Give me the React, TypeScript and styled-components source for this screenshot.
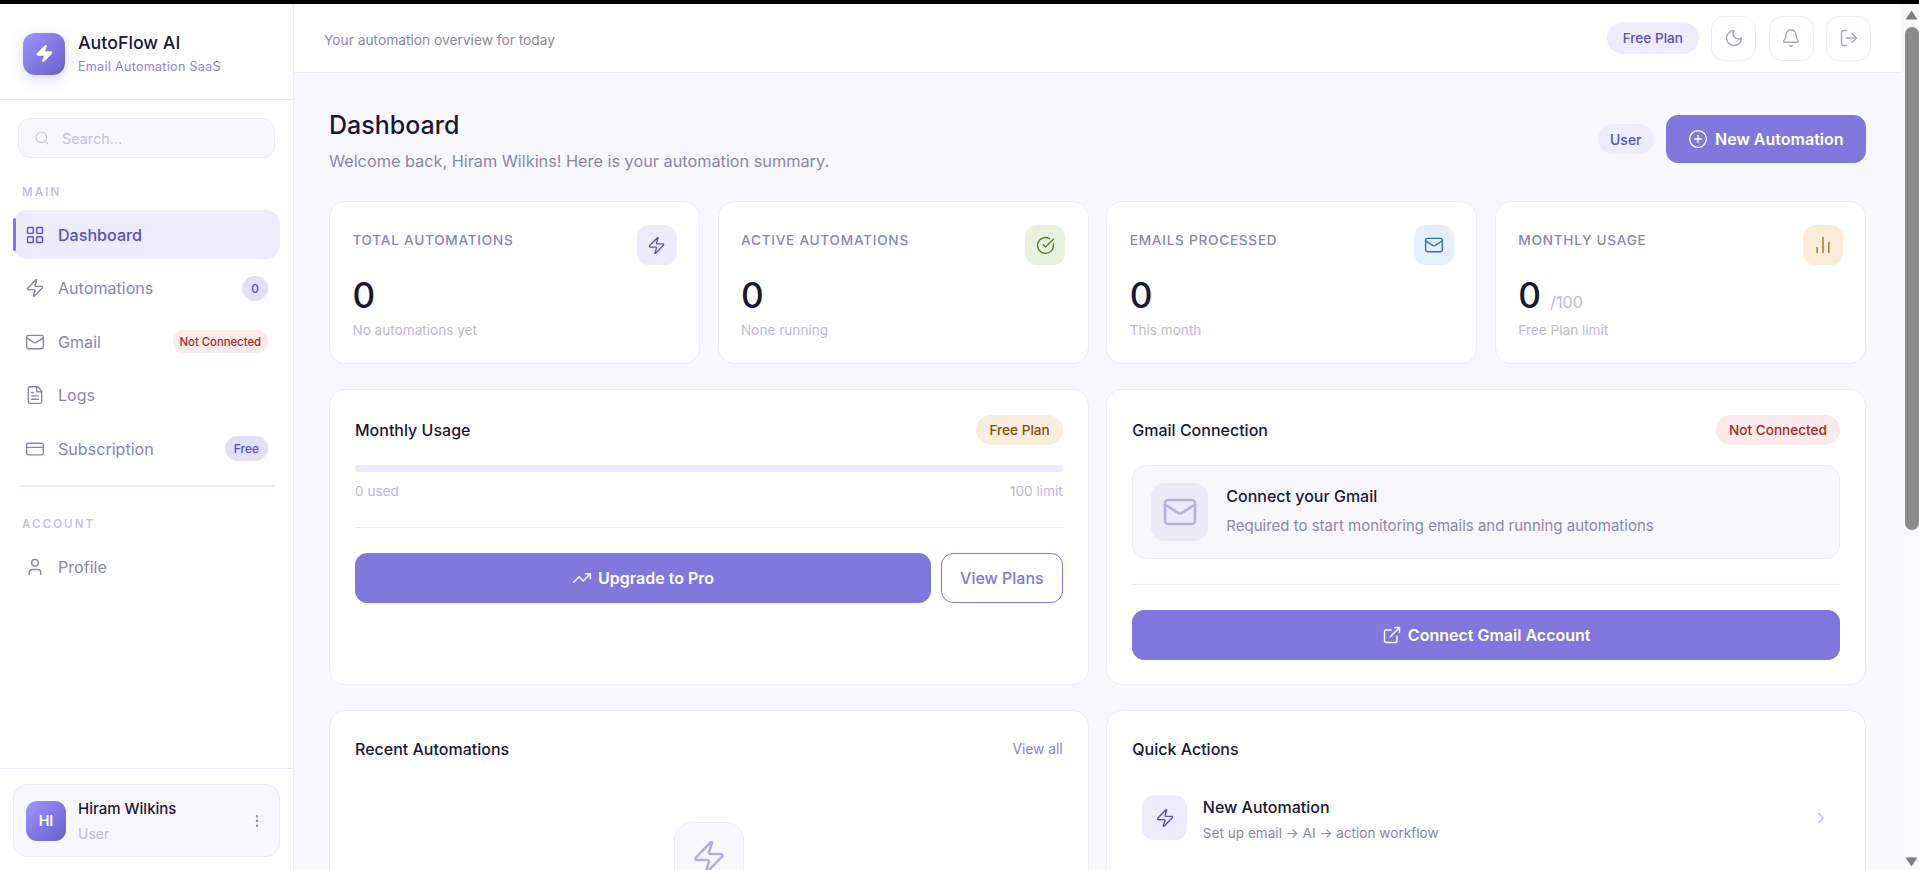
import { ReactNode } from 'react';
import styled, { createGlobalStyle } from 'styled-components';
import {
  BarChart2,
  Bell,
  ChevronRight,
  CircleCheckBig,
  CreditCard,
  ExternalLink,
  FileText,
  LayoutGrid,
  LogOut,
  Mail,
  MoreVertical,
  Moon,
  PlusCircle,
  Search,
  TrendingUp,
  User,
  Zap,
} from 'lucide-react';

const GlobalStyle = createGlobalStyle`
  * { box-sizing: border-box; }
  html, body { margin: 0; height: 100%; overflow: hidden; }
  body {
    font-family: Inter, "Noto Sans", sans-serif;
    color: #1a1733;
    background: #000;
  }
  #root { height: 100%; }
  .lucide { stroke-width: 1.7; flex: none; }
`;

const Frame = styled.div`
  height: 100vh;
  display: flex;
  flex-direction: column;
`;

const TopStrip = styled.div`
  height: 4px;
  flex: none;
  background: #000;
`;

const Shell = styled.div`
  flex: 1;
  min-height: 0;
  display: flex;
  background: #f8f7fe;
`;

/* ---------- sidebar ---------- */

const Sidebar = styled.aside`
  width: 294px;
  flex: none;
  display: flex;
  flex-direction: column;
  background: #fff;
  border-right: 1px solid #ecebf9;
`;

const Brand = styled.div`
  height: 96px;
  flex: none;
  display: flex;
  align-items: center;
  gap: 13px;
  padding: 4px 23px 0;
  border-bottom: 1px solid #ecebf9;
`;

const LogoBox = styled.div`
  width: 42px;
  height: 42px;
  border-radius: 12px;
  display: flex;
  align-items: center;
  justify-content: center;
  color: #fff;
  background: linear-gradient(135deg, #9d94ff, #6b5fc7);
  box-shadow: 0 4px 14px rgba(108, 95, 199, 0.25);
`;

const BrandName = styled.div`
  font-size: 17.8px;
  font-weight: 500;
  line-height: 24px;
  color: #1a1733;
  white-space: nowrap;
`;

const BrandTag = styled.div`
  font-size: 12.5px;
  line-height: 18px;
  margin-top: 3px;
  letter-spacing: 0.32px;
  color: #8c80e4;
  white-space: nowrap;
`;

const SearchBox = styled.div`
  height: 40px;
  margin: 18px 18px 0;
  padding: 0 15px;
  display: flex;
  align-items: center;
  gap: 12px;
  border: 1px solid #ecebf9;
  border-radius: 12px;
  background: #f8f7fe;
  color: #c5bfe4;
  font-size: 14.4px;
`;

const SectionLabel = styled.div<{ $top?: number }>`
  margin: ${(p) => p.$top ?? 0}px 22px 0;
  font-size: 11.5px;
  line-height: 14px;
  font-weight: 600;
  letter-spacing: 2.1px;
  color: #c5bfe4;
`;

const NavList = styled.nav`
  display: flex;
  flex-direction: column;
  gap: 4.6px;
  margin: 11.5px 13px 0 13px;
`;

const NavRow = styled.div<{ $active?: boolean }>`
  position: relative;
  height: 49px;
  display: flex;
  align-items: center;
  gap: 13px;
  padding: 0 12px;
  border-radius: 14px;
  font-size: 16.1px;
  font-weight: ${(p) => (p.$active ? 500 : 400)};
  color: ${(p) => (p.$active ? '#5a4fb8' : '#8a86a8')};
  background: ${(p) => (p.$active ? '#eeecfc' : 'transparent')};

  ${(p) =>
    p.$active &&
    `&::before {
      content: '';
      position: absolute;
      left: 0;
      top: 8px;
      bottom: 8px;
      width: 3px;
      border-radius: 2px;
      background: #7f76dc;
    }`}
`;

const NavLabel = styled.span`
  flex: 1;
`;

const NavBadge = styled.span<{ $tone?: 'danger' }>`
  height: ${(p) => (p.$tone ? '23px' : '25px')};
  min-width: 25px;
  padding: 0 ${(p) => (p.$tone ? '7px' : '9px')};
  display: inline-flex;
  align-items: center;
  justify-content: center;
  border-radius: 13px;
  font-size: ${(p) => (p.$tone ? '11.3px' : '12px')};
  font-weight: 500;
  color: ${(p) => (p.$tone ? '#a32a2a' : '#5a4fb8')};
  background: ${(p) => (p.$tone ? '#fbeaea' : '#e3dffa')};
`;

const SideDivider = styled.div`
  height: 2px;
  margin: 12px 18px 30px;
  background: #eeecfb;
`;

const Spacer = styled.div`
  flex: 1;
`;

const SideFooter = styled.div`
  flex: none;
  padding: 15px 13px 13px 13px;
  border-top: 1px solid #ecebf9;
`;

const UserCard = styled.div`
  height: 73px;
  display: flex;
  align-items: center;
  gap: 12px;
  padding: 0 14px 0 12px;
  border: 1px solid #ecebf9;
  border-radius: 14px;
  background: #f8f7fe;
`;

const Avatar = styled.div`
  width: 40px;
  height: 40px;
  flex: none;
  border-radius: 11px;
  display: flex;
  align-items: center;
  justify-content: center;
  font-size: 14.4px;
  font-weight: 600;
  color: #fff;
  background: linear-gradient(135deg, #9d94ff, #6b5fc7);
`;

const UserInfo = styled.div`
  flex: 1;
  padding-top: 1px;
`;

const UserName = styled.div`
  font-size: 15px;
  line-height: 20px;
  font-weight: 500;
  color: #1a1733;
`;

const UserRole = styled.div`
  font-size: 14px;
  line-height: 18px;
  margin-top: 6px;
  color: #bdb7de;
`;

/* ---------- main ---------- */

const MainArea = styled.main`
  flex: 1;
  min-width: 0;
  overflow: hidden;
  background: #f8f7fe;
`;

const ScrollRail = styled.div`
  width: 18px;
  flex: none;
  display: flex;
  flex-direction: column;
  padding: 6px 0 3px 4px;
  background: #f9f9fb;
`;

const RailThumb = styled.div`
  height: 503px;
  flex: none;
  margin-top: 7px;
  border-radius: 7px;
  background: #8b8b8b;
`;

const RailGap = styled.div`
  flex: 1;
`;

const RailSvg = styled.svg`
  display: block;
  flex: none;
  width: 13px;
  height: 10px;
`;

const RailArrow = ({ down }: { down?: boolean }) => (
  <RailSvg viewBox="0 0 13 10">
    <path d={down ? 'M6.5 9.5 L12.5 0.5 H0.5 Z' : 'M6.5 0.5 L12.5 9.5 H0.5 Z'} fill="#808080" />
  </RailSvg>
);

const TopBar = styled.header`
  height: 69px;
  display: flex;
  align-items: center;
  justify-content: space-between;
  padding: 0 30px;
  background: #fff;
  border-bottom: 1px solid #ecebf9;
`;

const TopHint = styled.div`
  padding-top: 4px;
  font-size: 13.76px;
  color: #8a86a8;
`;

const TopActions = styled.div`
  display: flex;
  align-items: center;
  gap: 12.5px;
`;

const PlanPill = styled.span`
  height: 32px;
  padding: 0 15.5px;
  display: inline-flex;
  align-items: center;
  border-radius: 16px;
  font-size: 13.6px;
  font-weight: 500;
  color: #5a4fb8;
  background: #eeecfc;
`;

const IconButton = styled.button`
  width: 45px;
  height: 45px;
  padding: 0;
  display: flex;
  align-items: center;
  justify-content: center;
  border: 1px solid #ecebf9;
  border-radius: 13px;
  background: #fff;
  color: #a9a5c4;
`;

const Content = styled.div`
  padding: 34px 35px 40px 35px;
`;

const PageHead = styled.div`
  display: flex;
  align-items: center;
  justify-content: space-between;
`;

const PageTitle = styled.h1`
  margin: 0;
  font-size: 25px;
  line-height: 36px;
  font-weight: 500;
  color: #1a1733;
`;

const PageSub = styled.div`
  margin-top: 6px;
  font-size: 16.27px;
  line-height: 24px;
  color: #8a86a8;
`;

const HeadActions = styled.div`
  display: flex;
  align-items: center;
  gap: 12px;
  margin-bottom: 2px;
`;

const RolePill = styled.span`
  height: 30px;
  padding: 0 12px;
  display: inline-flex;
  align-items: center;
  border-radius: 15px;
  font-size: 14px;
  font-weight: 500;
  color: #5a4fb8;
  background: #eeecfc;
`;

const Button = styled.button<{ $ghost?: boolean; $grow?: boolean; $block?: boolean }>`
  height: 50px;
  padding: 0 ${(p) => (p.$ghost ? 18 : 21.5)}px;
  display: inline-flex;
  align-items: center;
  justify-content: center;
  gap: 6px;
  flex: ${(p) => (p.$grow ? 1 : 'none')};
  width: ${(p) => (p.$block ? '100%' : 'auto')};
  border-radius: 12px;
  border: 1px solid ${(p) => (p.$ghost ? '#7f76dc' : '#8177dd')};
  background: ${(p) => (p.$ghost ? '#fff' : '#8177dd')};
  color: ${(p) => (p.$ghost ? '#7f76dc' : '#fff')};
  font-family: inherit;
  font-size: 16px;
  font-weight: ${(p) => (p.$ghost ? 500 : 600)};
`;

const HeadButton = styled(Button)`
  height: 48px;
  gap: 7px;
`;

const StatGrid = styled.section`
  display: grid;
  grid-template-columns: repeat(4, 1fr);
  gap: 17.6px;
  margin-top: 28px;
`;

const Card = styled.div`
  background: #fff;
  border: 1px solid #ecebf9;
  border-radius: 16px;
`;

const StatCard = styled(Card)`
  height: 162.6px;
  padding: 23px 22.4px;
`;

const StatTop = styled.div`
  display: flex;
  justify-content: space-between;
  align-items: flex-start;
`;

const StatLabel = styled.div`
  margin-top: 5px;
  font-size: 13.6px;
  line-height: 20px;
  font-weight: 500;
  letter-spacing: 0.75px;
  text-transform: uppercase;
  color: #8a86a8;
`;

const StatIcon = styled.div<{ $bg: string; $fg: string }>`
  width: 40px;
  height: 40px;
  border-radius: 12px;
  display: flex;
  align-items: center;
  justify-content: center;
  background: ${(p) => p.$bg};
  color: ${(p) => p.$fg};
`;

const StatValue = styled.div`
  height: 44px;
  display: flex;
  align-items: baseline;
  gap: 9px;
  margin-top: 8px;
  font-size: 35.2px;
  line-height: 44px;
  font-weight: 450;
  color: #1a1733;
`;

const StatUnit = styled.span`
  font-size: 16.3px;
  line-height: 20px;
  font-weight: 400;
  color: #bdb7de;
`;

const StatHint = styled.div`
  margin-top: 3px;
  font-size: 13.6px;
  line-height: 20px;
  color: #bdb7de;
`;

const TwoCols = styled.section<{ $top: number }>`
  display: grid;
  grid-template-columns: 1fr 1fr;
  gap: 17.6px;
  margin-top: ${(p) => p.$top}px;
`;

const Panel = styled(Card)<{ $height: number }>`
  height: ${(p) => p.$height}px;
  padding: 25px;
`;

const PanelHead = styled.div<{ $compact?: boolean }>`
  height: ${(p) => (p.$compact ? 26 : 30)}px;
  display: flex;
  align-items: center;
  justify-content: space-between;
`;

const PanelTitle = styled.h2`
  margin: 0;
  font-size: 16px;
  font-weight: 500;
  color: #1a1733;
`;

const Pill = styled.span<{ $tone: 'warn' | 'danger' }>`
  height: 30px;
  padding: 0 13px;
  display: inline-flex;
  align-items: center;
  border-radius: 15px;
  font-size: 13.6px;
  font-weight: 500;
  color: ${(p) => (p.$tone === 'warn' ? '#7d4e0a' : '#9c2a2a')};
  background: ${(p) => (p.$tone === 'warn' ? '#f9eedd' : '#fbeaea')};
`;

const ViewAll = styled.span`
  font-size: 13.8px;
  color: #8a80e6;
`;

const ProgressTrack = styled.div`
  height: 7px;
  margin-top: 20px;
  border-radius: 4px;
  background: #eceaf8;
`;

const ProgressFill = styled.div`
  height: 100%;
  border-radius: 4px;
  background: #8177dd;
`;

const ProgressLabels = styled.div`
  display: flex;
  justify-content: space-between;
  margin-top: 9px;
  font-size: 13.6px;
  line-height: 20px;
  color: #bdb7de;
`;

const Rule = styled.hr<{ $top: number }>`
  height: 1px;
  margin: ${(p) => p.$top}px 0 25px;
  border: 0;
  background: #ecebf9;
`;

const ButtonRow = styled.div`
  display: flex;
  gap: 10px;
`;

const ConnectBox = styled.div`
  height: 94px;
  margin-top: 20px;
  padding: 0 18px;
  display: flex;
  align-items: center;
  gap: 18px;
  border: 1px solid #ecebf9;
  border-radius: 14px;
  background: #f8f7fe;
`;

const ConnectIcon = styled.div`
  width: 57px;
  height: 58px;
  border-radius: 14px;
  display: flex;
  align-items: center;
  justify-content: center;
  color: #b5afdc;
  background: #eceaf8;
`;

const ConnectText = styled.div`
  padding-bottom: 2px;
`;

const RowTitle = styled.div`
  font-size: 16px;
  line-height: 20px;
  font-weight: 500;
  color: #1a1733;
`;

const RowSub = styled.div`
  margin-top: 10px;
  font-size: 15px;
  line-height: 20px;
  color: #8a86a8;
`;

const EmptyState = styled.div`
  margin-top: 60px;
  display: flex;
  justify-content: center;
`;

const EmptyIcon = styled.div`
  width: 70px;
  height: 70px;
  border: 1px solid #ecebf9;
  border-radius: 18px;
  display: flex;
  align-items: center;
  justify-content: center;
  color: #b5afdc;
  background: #f8f7fe;
`;

const ActionRow = styled.div`
  height: 77px;
  margin-top: 17px;
  padding: 0 10px;
  display: flex;
  align-items: center;
  gap: 15.5px;
`;

const ActionIcon = styled.div`
  width: 45px;
  height: 45px;
  flex: none;
  border-radius: 12px;
  display: flex;
  align-items: center;
  justify-content: center;
  color: #5a4fb8;
  background: #eeecfc;
`;

const ActionBody = styled.div`
  flex: 1;
  padding-top: 5px;
`;

const ActionTitle = styled.div`
  font-size: 16px;
  line-height: 20px;
  font-weight: 500;
  color: #1a1733;
`;

const ActionSub = styled.div`
  margin-top: 6.5px;
  font-size: 13.6px;
  line-height: 19px;
  color: #8a86a8;
`;

const ActionArrow = styled.div`
  color: #bdb7de;
  display: flex;
`;

type NavItem = { label: string; icon: ReactNode; active?: boolean; badge?: ReactNode };

const mainNav: NavItem[] = [
  { label: 'Dashboard', icon: <LayoutGrid size={20} />, active: true },
  { label: 'Automations', icon: <Zap size={20} />, badge: <NavBadge>0</NavBadge> },
  { label: 'Gmail', icon: <Mail size={20} />, badge: <NavBadge $tone="danger">Not Connected</NavBadge> },
  { label: 'Logs', icon: <FileText size={20} /> },
  { label: 'Subscription', icon: <CreditCard size={20} />, badge: <NavBadge>Free</NavBadge> },
];

const stats = [
  { label: 'Total Automations', hint: 'No automations yet', bg: '#eeecfc', fg: '#5a4fb8', icon: <Zap size={19} /> },
  { label: 'Active Automations', hint: 'None running', bg: '#e8f2dc', fg: '#4a7f2c', icon: <CircleCheckBig size={19} /> },
  { label: 'Emails Processed', hint: 'This month', bg: '#e5f0fb', fg: '#2e6fb8', icon: <Mail size={20} /> },
  { label: 'Monthly Usage', hint: 'Free Plan limit', bg: '#faecd8', fg: '#a5711f', icon: <BarChart2 size={20} />, unit: '/100' },
];

export default function App() {
  return (
    <Frame>
      <GlobalStyle />
      <TopStrip />
      <Shell>
        <Sidebar>
          <Brand>
            <LogoBox>
              <Zap size={19} fill="currentColor" />
            </LogoBox>
            <div>
              <BrandName>AutoFlow AI</BrandName>
              <BrandTag>Email Automation SaaS</BrandTag>
            </div>
          </Brand>
          <SearchBox>
            <Search size={16} />
            <span>Search...</span>
          </SearchBox>
          <SectionLabel $top={26.5}>MAIN</SectionLabel>
          <NavList>
            {mainNav.map((item) => (
              <NavRow key={item.label} $active={item.active}>
                {item.icon}
                <NavLabel>{item.label}</NavLabel>
                {item.badge}
              </NavRow>
            ))}
          </NavList>
          <SideDivider />
          <SectionLabel>ACCOUNT</SectionLabel>
          <NavList>
            <NavRow>
              <User size={20} />
              <NavLabel>Profile</NavLabel>
            </NavRow>
          </NavList>
          <Spacer />
          <SideFooter>
            <UserCard>
              <Avatar>HI</Avatar>
              <UserInfo>
                <UserName>Hiram Wilkins</UserName>
                <UserRole>User</UserRole>
              </UserInfo>
              <MoreVertical size={16} color="#8a80e6" />
            </UserCard>
          </SideFooter>
        </Sidebar>

        <MainArea>
          <TopBar>
            <TopHint>Your automation overview for today</TopHint>
            <TopActions>
              <PlanPill>Free Plan</PlanPill>
              <IconButton>
                <Moon size={20} />
              </IconButton>
              <IconButton>
                <Bell size={20} />
              </IconButton>
              <IconButton>
                <LogOut size={20} />
              </IconButton>
            </TopActions>
          </TopBar>

          <Content>
            <PageHead>
              <div>
                <PageTitle>Dashboard</PageTitle>
                <PageSub>Welcome back, Hiram Wilkins! Here is your automation summary.</PageSub>
              </div>
              <HeadActions>
                <RolePill>User</RolePill>
                <HeadButton>
                  <PlusCircle size={20} />
                  New Automation
                </HeadButton>
              </HeadActions>
            </PageHead>

            <StatGrid>
              {stats.map((s) => (
                <StatCard key={s.label}>
                  <StatTop>
                    <StatLabel>{s.label}</StatLabel>
                    <StatIcon $bg={s.bg} $fg={s.fg}>
                      {s.icon}
                    </StatIcon>
                  </StatTop>
                  <StatValue>
                    0{s.unit && <StatUnit>{s.unit}</StatUnit>}
                  </StatValue>
                  <StatHint>{s.hint}</StatHint>
                </StatCard>
              ))}
            </StatGrid>

            <TwoCols $top={25.6}>
              <Panel $height={296}>
                <PanelHead>
                  <PanelTitle>Monthly Usage</PanelTitle>
                  <Pill $tone="warn">Free Plan</Pill>
                </PanelHead>
                <ProgressTrack>
                  <ProgressFill style={{ width: '0%' }} />
                </ProgressTrack>
                <ProgressLabels>
                  <span>0 used</span>
                  <span>100 limit</span>
                </ProgressLabels>
                <Rule $top={26} />
                <ButtonRow>
                  <Button $grow>
                    <TrendingUp size={20} />
                    Upgrade to Pro
                  </Button>
                  <Button $ghost>View Plans</Button>
                </ButtonRow>
              </Panel>

              <Panel $height={296}>
                <PanelHead>
                  <PanelTitle>Gmail Connection</PanelTitle>
                  <Pill $tone="danger">Not Connected</Pill>
                </PanelHead>
                <ConnectBox>
                  <ConnectIcon>
                    <Mail size={36} />
                  </ConnectIcon>
                  <ConnectText>
                    <RowTitle>Connect your Gmail</RowTitle>
                    <RowSub>Required to start monitoring emails and running automations</RowSub>
                  </ConnectText>
                </ConnectBox>
                <Rule $top={25} />
                <Button $block>
                  <ExternalLink size={20} />
                  Connect Gmail Account
                </Button>
              </Panel>
            </TwoCols>

            <TwoCols $top={25}>
              <Panel $height={300}>
                <PanelHead $compact>
                  <PanelTitle>Recent Automations</PanelTitle>
                  <ViewAll>View all</ViewAll>
                </PanelHead>
                <EmptyState>
                  <EmptyIcon>
                    <Zap size={36} />
                  </EmptyIcon>
                </EmptyState>
              </Panel>

              <Panel $height={300}>
                <PanelHead $compact>
                  <PanelTitle>Quick Actions</PanelTitle>
                </PanelHead>
                <ActionRow>
                  <ActionIcon>
                    <Zap size={20} />
                  </ActionIcon>
                  <ActionBody>
                    <ActionTitle>New Automation</ActionTitle>
                    <ActionSub>Set up email → AI → action workflow</ActionSub>
                  </ActionBody>
                  <ActionArrow>
                    <ChevronRight size={18} />
                  </ActionArrow>
                </ActionRow>
              </Panel>
            </TwoCols>
          </Content>
        </MainArea>

        <ScrollRail>
          <RailArrow />
          <RailThumb />
          <RailGap />
          <RailArrow down />
        </ScrollRail>
      </Shell>
    </Frame>
  );
}
